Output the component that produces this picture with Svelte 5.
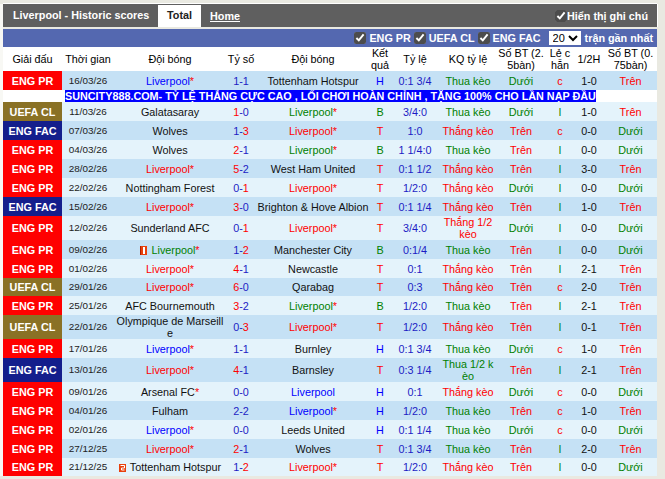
<script>
  const leagues = { PR: 'ENG PR', CL: 'UEFA CL', FAC: 'ENG FAC' };
  const head = ['Giải đấu', 'Thời gian', 'Đội bóng', 'Tỷ số', 'Đội bóng', 'Kết quả', 'Tỷ lệ', 'KQ tỷ lệ', 'Số BT (2.5bàn)', 'Lẻ c hẵn', '1/2H', 'Số BT (0.75bàn)'];

  const rows = [
    ['PR', '16/03/26', 'Liverpool*', 1, 1, 'Tottenham Hotspur', 'H', '0:1 3/4', 'Thua kèo', 'Dưới', 'c', '1-0', 'Trên'],
    ['CL', '11/03/26', 'Galatasaray', 1, 0, 'Liverpool*', 'B', '3/4:0', 'Thua kèo', 'Dưới', 'l', '1-0', 'Trên', 'banner'],
    ['FAC', '07/03/26', 'Wolves', 1, 3, 'Liverpool*', 'T', '1:0', 'Thắng kèo', 'Trên', 'c', '0-0', 'Dưới'],
    ['PR', '04/03/26', 'Wolves', 2, 1, 'Liverpool*', 'B', '1 1/4:0', 'Thua kèo', 'Trên', 'l', '0-0', 'Dưới'],
    ['PR', '28/02/26', 'Liverpool*', 5, 2, 'West Ham United', 'T', '0:1 1/2', 'Thắng kèo', 'Trên', 'l', '3-0', 'Trên'],
    ['PR', '22/02/26', 'Nottingham Forest', 0, 1, 'Liverpool*', 'T', '1/2:0', 'Thắng kèo', 'Dưới', 'l', '0-0', 'Dưới'],
    ['FAC', '15/02/26', 'Liverpool*', 3, 0, 'Brighton & Hove Albion', 'T', '0:1 1/4', 'Thắng kèo', 'Trên', 'l', '1-0', 'Trên'],
    ['PR', '12/02/26', 'Sunderland AFC', 0, 1, 'Liverpool*', 'T', '3/4:0', 'Thắng 1/2 kèo', 'Dưới', 'l', '0-0', 'Dưới'],
    ['PR', '09/02/26', 'Liverpool*', 1, 2, 'Manchester City', 'B', '0:1/4', 'Thua kèo', 'Trên', 'l', '0-0', 'Dưới', 'flagA'],
    ['PR', '01/02/26', 'Liverpool*', 4, 1, 'Newcastle', 'T', '0:1', 'Thắng kèo', 'Trên', 'l', '2-1', 'Trên'],
    ['CL', '29/01/26', 'Liverpool*', 6, 0, 'Qarabag', 'T', '0:3', 'Thắng kèo', 'Trên', 'c', '2-0', 'Trên', 'short'],
    ['PR', '25/01/26', 'AFC Bournemouth', 3, 2, 'Liverpool*', 'B', '1/2:0', 'Thua kèo', 'Trên', 'l', '2-1', 'Trên'],
    ['CL', '22/01/26', 'Olympique de Marseille', 0, 3, 'Liverpool*', 'T', '1/2:0', 'Thắng kèo', 'Trên', 'l', '0-1', 'Trên'],
    ['PR', '17/01/26', 'Liverpool*', 1, 1, 'Burnley', 'H', '0:1 3/4', 'Thua kèo', 'Dưới', 'c', '1-0', 'Trên'],
    ['FAC', '13/01/26', 'Liverpool*', 4, 1, 'Barnsley', 'T', '0:3 1/4', 'Thua 1/2 kèo', 'Trên', 'l', '2-1', 'Trên'],
    ['PR', '09/01/26', 'Arsenal FC*', 0, 0, 'Liverpool', 'H', '0:1', 'Thắng kèo', 'Dưới', 'c', '0-0', 'Dưới'],
    ['PR', '04/01/26', 'Fulham', 2, 2, 'Liverpool*', 'H', '1/2:0', 'Thua kèo', 'Trên', 'c', '1-0', 'Trên'],
    ['PR', '02/01/26', 'Liverpool*', 0, 0, 'Leeds United', 'H', '0:1 1/4', 'Thua kèo', 'Dưới', 'c', '0-0', 'Dưới'],
    ['PR', '27/12/25', 'Liverpool*', 2, 1, 'Wolves', 'T', '0:1 3/4', 'Thua kèo', 'Trên', 'l', '2-0', 'Trên'],
    ['PR', '21/12/25', 'Tottenham Hotspur', 1, 2, 'Liverpool*', 'T', '1/2:0', 'Thắng kèo', 'Trên', 'l', '0-0', 'Dưới', 'flagB short']
  ];

  const resultClass = { H: 'blue', T: 'red', B: 'green' };
  const good = (v) => (v === 'Trên' || v.startsWith('Thắng') ? 'red' : 'green');
  const splitName = (n) => (n.endsWith('*') ? [n.slice(0, -1), '*'] : [n, '']);
  const nameClass = (n, res) => (n.startsWith('Liverpool') ? resultClass[res] : 'dark');
</script>

{#snippet team(name, res, extra)}
  {#if extra === 'flagA'}
    <svg class="flag" width="7" height="9" viewBox="0 0 7 9"><rect width="7" height="9" fill="#e8400c" /><rect x="3" y="1" width="2" height="7" fill="#fff" /><rect width="1" height="9" fill="#b02000" /></svg>
  {:else if extra === 'flagB'}
    <svg class="flag" width="7" height="8" viewBox="0 0 7 8"><rect width="7" height="8" fill="#e8400c" /><path d="M1.5 1.5h4v2.5h-3v2h3" fill="none" stroke="#fff" /></svg>
  {/if}
  <span class={nameClass(name, res)}>{splitName(name)[0]}</span>{#if splitName(name)[1]}<span class="red">*</span>{/if}
{/snippet}

<div class="wrap">
  <div class="titlebar">
    <h1>Liverpool - Historic scores</h1>
    <span class="tab">Total</span>
    <a class="home" href="#home">Home</a>
    <label class="notes"><input type="checkbox" checked />Hiển thị ghi chú</label>
  </div>

  <div class="filters">
    <label><input type="checkbox" checked />ENG PR</label>
    <label><input type="checkbox" checked />UEFA CL</label>
    <label><input type="checkbox" checked />ENG FAC</label>
    <select><option>20</option></select>
    <span>trận gần nhất</span>
  </div>

  <table>
    <colgroup>
      <col style="width:59px" /><col style="width:52px" /><col style="width:112px" /><col style="width:30px" />
      <col style="width:114px" /><col style="width:20px" /><col style="width:50px" /><col style="width:56px" />
      <col style="width:50px" /><col style="width:28px" /><col style="width:30px" /><col style="width:53px" />
    </colgroup>
    <thead>
      <tr>
        {#each head as h}<th>{h}</th>{/each}
      </tr>
    </thead>
    <tbody>
      {#each rows as r, i}
        {#if r[13] === 'banner'}
          <tr class="promo">
            <td></td>
            <td colspan="11"><a href="#promo">SUNCITY888.COM- TỶ LỆ THẮNG CỰC CAO , LỐI CHƠI HOÀN CHỈNH , TẶNG 100% CHO LẦN NẠP ĐẦU</a></td>
          </tr>
        {/if}
        <tr class:alt={i % 2 === 0} class:short={r[13] && r[13].includes('short')}>
          <td class="league {r[0]}">{leagues[r[0]]}</td>
          <td class="date">{r[1]}</td>
          <td>{@render team(r[2], r[6], r[13] && r[13].split(' ')[0])}</td>
          <td class="score"><span class:red={r[3] > r[4]}>{r[3]}</span>-<span class:red={r[4] > r[3]}>{r[4]}</span></td>
          <td>{@render team(r[5], r[6])}</td>
          <td class={resultClass[r[6]]}>{r[6]}</td>
          <td class="odds">{r[7]}</td>
          <td class={good(r[8])}>{r[8]}</td>
          <td class={good(r[9])}>{r[9]}</td>
          <td class={r[10] === 'c' ? 'red' : 'green'}>{r[10]}</td>
          <td class="dark">{r[11]}</td>
          <td class={good(r[12])}>{r[12]}</td>
        </tr>
      {/each}
    </tbody>
  </table>
</div>

<style>
  :global(body) {
    background: #e9e9e1;
    font-family: "Liberation Sans", Arial, sans-serif;
    font-size: 10.8px;
  }

  .wrap {
    width: 654px;
    margin: 4px 0 0 3px;
    box-shadow: -3px 0 0 #f8f8f4;
  }

  .titlebar {
    display: flex;
    align-items: flex-end;
    height: 23px;
    padding-left: 10px;
    background: #5f5f5f;
    color: #fff;
    font-weight: bold;
    box-shadow: 1px 0 0 #fff, 0 -1px 0 #fff;
  }

  h1 {
    margin: 0;
    font-size: 10.8px;
    line-height: 21px;
    align-self: center;
    width: 145px;
    white-space: nowrap;
  }

  .tab {
    width: 43px;
    height: 22px;
    line-height: 21px;
    text-align: center;
    background: #fff;
    color: #222;
  }

  .home {
    margin-left: 9px;
    align-self: center;
    color: #fff;
  }

  .notes {
    margin-left: auto;
    margin-right: 9px;
    align-self: center;
    display: flex;
    align-items: center;
    gap: 0;
  }

  input {
    width: 12px;
    height: 12px;
    margin: 0;
    accent-color: #4c4c4c;
  }

  .filters {
    display: flex;
    align-items: center;
    justify-content: flex-end;
    gap: 3px;
    height: 18px;
    margin-top: 2px;
    padding-right: 4px;
    background: #5468b0;
    color: #fff;
    font-weight: bold;
  }

  .filters label {
    display: flex;
    align-items: center;
    gap: 3px;
  }

  select {
    width: 32px;
    height: 14px;
    margin: 0 1px 0 5px;
    padding: 0;
    border: 0;
    background: #fff;
    font-family: inherit;
    font-size: 11px;
  }

  table {
    width: 654px;
    table-layout: fixed;
    border-collapse: collapse;
    background: #e4f3fb;
    line-height: 12px;
    text-align: center;
    word-break: break-all;
  }

  th {
    height: 24px;
    padding: 0;
    background: #fff;
    font-weight: normal;
    color: #000;
  }

  th:last-child {
    padding: 0 3px;
  }

  td {
    height: 19px;
    padding: 0;
  }

  .alt td {
    background: #c5e1f5;
  }

  .short td {
    height: 18px;
  }

  tr td.league {
    color: #fff;
    font-weight: bold;
  }

  tr td.PR { background: #f00; }
  tr td.CL { background: #8a7125; }
  tr td.FAC { background: #141e8c; }

  .promo td {
    height: 12px;
    background: #fff;
    text-align: left;
    white-space: nowrap;
    word-break: normal;
  }

  .promo a {
    margin-left: 3px;
    background: #00f;
    color: #fff;
    font-weight: bold;
    text-decoration: none;
  }

  .date {
    font-size: 9.9px;
    color: #222;
  }

  .score,
  .odds {
    color: #1c1cc4;
  }

  .red { color: #f00; }
  .green { color: #008000; }
  .blue { color: #00f; }
  .dark { color: #111; }

  .flag {
    vertical-align: -1px;
    margin-right: 1px;
  }
</style>
